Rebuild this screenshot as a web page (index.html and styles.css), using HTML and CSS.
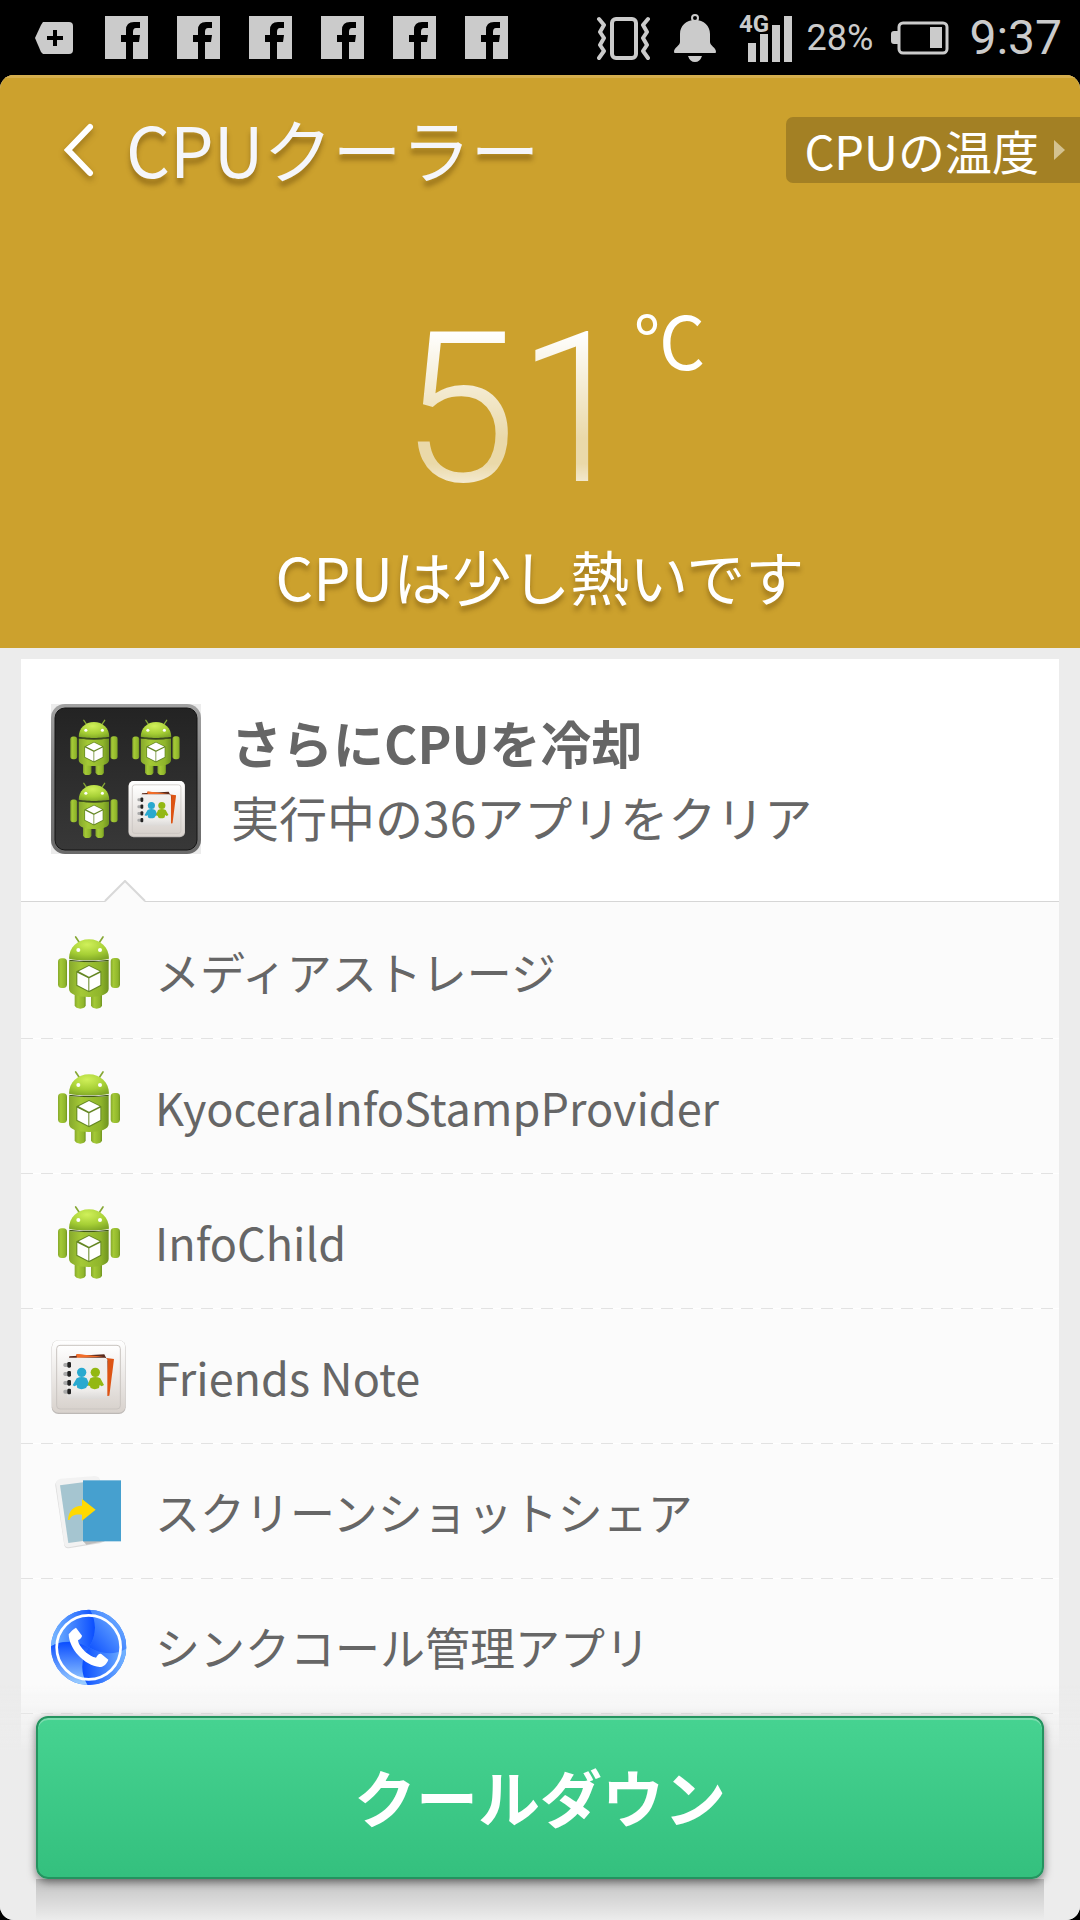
FILE: index.html
```html
<!DOCTYPE html>
<html lang="ja">
<head>
<meta charset="utf-8">
<meta name="viewport" content="width=device-width, initial-scale=1">
<title>CPUクーラー</title>
<link rel="stylesheet" href="styles.css">
</head>
<body>
<svg class="sprite" width="0" height="0" aria-hidden="true">
  <defs>
    <linearGradient id="g-body" x1="0" y1="0" x2="1" y2="0">
      <stop offset="0" stop-color="#86a82c"/><stop offset=".3" stop-color="#a4c936"/><stop offset=".8" stop-color="#8fb52b"/><stop offset="1" stop-color="#6f9320"/>
    </linearGradient>
    <radialGradient id="g-head" cx=".45" cy=".25" r=".8">
      <stop offset="0" stop-color="#d0f05a"/><stop offset=".6" stop-color="#a6cf35"/><stop offset="1" stop-color="#7fa626"/>
    </radialGradient>
    <linearGradient id="g-tile" x1="0" y1="0" x2="0" y2="1">
      <stop offset="0" stop-color="#ffffff"/><stop offset="1" stop-color="#d8d2cd"/>
    </linearGradient>
    <linearGradient id="g-page" x1="0" y1="0" x2="0" y2="1">
      <stop offset="0" stop-color="#f1f0ef"/><stop offset=".8" stop-color="#eeecea"/><stop offset="1" stop-color="#dcdad8"/>
    </linearGradient>
    <linearGradient id="g-thumb" x1="0" y1="0" x2="0" y2="1">
      <stop offset="0" stop-color="#232323"/><stop offset="1" stop-color="#383838"/>
    </linearGradient>
    <linearGradient id="g-thumb-edge" x1="0" y1="0" x2="0" y2="1">
      <stop offset="0" stop-color="#a2a2a2"/><stop offset=".5" stop-color="#7e7e7e"/><stop offset="1" stop-color="#6a6a6a"/>
    </linearGradient>
    <linearGradient id="g-blue-a" x1="0" y1="0" x2="1" y2="0">
      <stop offset="0" stop-color="#7cbcff"/><stop offset="1" stop-color="#0a4dff"/>
    </linearGradient>
    <linearGradient id="g-blue-b" x1="1" y1="0" x2="0" y2="1">
      <stop offset="0" stop-color="#8ccaff"/><stop offset="1" stop-color="#0a4dff"/>
    </linearGradient>
    <linearGradient id="g-blue-c" x1="1" y1="0" x2="0" y2="0">
      <stop offset="0" stop-color="#7cbcff"/><stop offset="1" stop-color="#0a4dff"/>
    </linearGradient>
    <linearGradient id="g-blue-d" x1="0" y1="1" x2="0" y2="0">
      <stop offset="0" stop-color="#a6d8ff"/><stop offset="1" stop-color="#0a4dff"/>
    </linearGradient>
  </defs>

  <symbol id="android" viewBox="63 69 228 228">
    <path d="M137 78l12 18M219 78l-12 18" stroke="#86a835" stroke-width="5" stroke-linecap="round"/>
    <path d="M117 143c0-34 26-58 60-58s60 24 60 58c-18 6-102 6-120 0z" fill="url(#g-head)"/>
    <rect x="84" y="142" width="27" height="89" rx="11" fill="url(#g-body)"/>
    <rect x="242" y="141" width="28" height="90" rx="11" fill="url(#g-body)"/>
    <path d="M134 245h33v38q-2 10-16 10t-17-10z" fill="url(#g-body)"/>
    <path d="M183 245h33v38q-2 10-16 10t-17-10z" fill="url(#g-body)"/>
    <path d="M117 150q60 7 119 0v84c0 16-24 24-59 24s-60-8-60-24z" fill="url(#g-body)"/>
    <path d="M118 146q60 7 118 0v4q-60 7-118 0z" fill="#43591a"/>
    <circle cx="145" cy="117" r="6" fill="#fff"/>
    <circle cx="210" cy="117" r="6" fill="#fff"/>
    <path d="M177 162l37 19v43l-37 20-38-20v-43z" fill="#658724"/>
    <path d="M177 165l32 16-32 16-31-16zM142 185l33 17v37l-33-17zM211 185l-33 17v37l33-17z" fill="#fff"/>
  </symbol>

  <symbol id="friends" viewBox="63 54 228 228">
    <rect x="65" y="58" width="222" height="221" rx="20" fill="#bdb9b6"/>
    <rect x="66" y="58" width="220" height="217" rx="19" fill="url(#g-tile)"/>
    <rect x="80" y="73" width="191" height="191" rx="10" fill="url(#g-tile)" stroke="#c9c4c0" stroke-width="3"/>
    <path d="M140 99l112 15-14 110-12 2-92-110z" fill="#dd5414"/>
    <path d="M118 106l105-6 10 20-5 100-112-100z" fill="#5a2a1c"/>
    <path d="M140 99l80 8-80 4z" fill="#f36d28"/>
    <rect x="111" y="110" width="121" height="123" rx="8" fill="url(#g-page)"/>
    <g fill="#aaa"><rect x="100" y="126" width="14" height="12" rx="5"/><rect x="100" y="153" width="14" height="12" rx="5"/><rect x="100" y="180" width="14" height="12" rx="5"/><rect x="100" y="206" width="14" height="12" rx="5"/></g>
    <g fill="#222"><rect x="112" y="123" width="11" height="17" rx="4"/><rect x="112" y="150" width="11" height="17" rx="4"/><rect x="112" y="177" width="11" height="17" rx="4"/><rect x="112" y="203" width="11" height="17" rx="4"/></g>
    <circle cx="155" cy="154" r="14" fill="#29a9cf"/>
    <path d="M140 172q15-8 30 0l9 19-8 5-3 5q-14 7-26 0l-2-9-6 4-6-3z" fill="#29a9cf"/>
    <circle cx="196" cy="154" r="14" fill="#93b813"/>
    <path d="M181 172q15-8 30 0l11 20-7 4-6-4-2 9q-13 7-25 0l-2-5-7-4z" fill="#93b813"/>
  </symbol>

  <symbol id="share" viewBox="63 459 228 228">
    <path d="M92 476l104-9q10 0 12 8l16 186-14 6-94 15q-11 1-13-9L76 493q-1-12 16-17z" fill="#dcdcdc"/>
    <path d="M92 473l104-8q8 0 12 8l10 188-102 18q-11 1-13-9L78 490q-1-14 14-17z" fill="#f2f2f2"/>
    <path d="M90 493l69-9v176l-44 6z" fill="#a5c5d0"/>
    <path d="M159 660h66l-56 11z" fill="#bcbcbc"/>
    <rect x="159" y="478" width="114" height="183" fill="#46a0cf"/>
    <path d="M114 597c2-28 16-42 42-43v-20l41 32-41 33v-18c-21-2-32 2-38 16z" fill="#ffd900"/>
  </symbol>

  <symbol id="sync" viewBox="63 864 228 228">
    <clipPath id="disc"><circle cx="176" cy="979" r="113"/></clipPath>
    <g clip-path="url(#disc)">
      <rect x="63" y="866" width="226" height="226" fill="#2a74ff"/>
      <path d="M60 860h117c24 40 24 80 0 119-50-26-90-18-117-1z" fill="url(#g-blue-a)"/>
      <path d="M177 860h120v120c-45 26-85 20-120-1 24-39 24-79 0-119z" fill="url(#g-blue-b)"/>
      <path d="M297 978v120H176c-26-40-26-80 0-119 40 22 80 26 121-1z" fill="url(#g-blue-c)"/>
      <path d="M60 978c30-20 76-20 116 1-26 39-26 79 0 119H60z" fill="url(#g-blue-d)"/>
    </g>
    <circle cx="176" cy="979" r="96" fill="none" stroke="#fff" stroke-width="8"/>
    <path d="M138 920l18 24q0 6-12 14c2 20 34 50 54 52 6-10 10-14 16-11l21 17c-4 12-14 22-26 22-46-4-92-54-93-98 6-8 14-16 22-20z" fill="#fff"/>
  </symbol>

  <symbol id="fb" viewBox="0 0 43 43">
    <path d="M0 0h43v43H28V26h6l1-7h-7v-3q0-4 3-4h4V6h-6q-8 0-8 8v5h-5v7h5v17H0z" fill="#cbcbcb"/>
  </symbol>
</svg>

<header class="status-bar">
  <div class="notices">
    <svg class="tag" viewBox="0 0 38 32"><path d="M8 0h26q4 0 4 4v24q0 4-4 4H8L6 30 0 16 6 3z" fill="#cbcbcb"/><path d="M12 16h16M20 8v16" stroke="#000" stroke-width="4"/></svg>
    <svg class="fb"><use href="#fb"/></svg>
    <svg class="fb"><use href="#fb"/></svg>
    <svg class="fb"><use href="#fb"/></svg>
    <svg class="fb"><use href="#fb"/></svg>
    <svg class="fb"><use href="#fb"/></svg>
    <svg class="fb"><use href="#fb"/></svg>
  </div>
  <div class="system">
    <svg class="vibrate" viewBox="0 0 56 44" fill="none" stroke="#cbcbcb" stroke-width="4" stroke-linecap="round" stroke-linejoin="round"><rect x="16" y="3" width="24" height="39" rx="4"/><path d="M3 3l5 6-4 7 4 6-4 7 4 6-5 7M52 3l-5 6 4 7-4 6 4 7-4 6 5 7"/></svg>
    <svg class="bell" viewBox="0 0 42 48" fill="#cbcbcb"><circle cx="21" cy="4" r="3" fill="none" stroke="#cbcbcb" stroke-width="2"/><path d="M21 6c9 0 15 6 15 14v8c0 4 6 5 6 10 0 1-1 1-2 1H2c-1 0-2 0-2-1 0-5 6-6 6-10v-8C6 12 12 6 21 6zM14 42h14q-2 6-7 6t-7-6z"/></svg>
    <svg class="signal" viewBox="0 0 54 50" fill="#cbcbcb"><path d="M9 30h8v19H9zM21 21h8v28h-8zM33 12h8v37h-8zM45 3h8v46h-8z"/><text class="network" x="0" y="19">4G</text></svg>
    <span class="battery-level">28%</span>
    <svg class="battery" viewBox="0 0 58 34"><rect x="8" y="2" width="48" height="30" rx="4" fill="none" stroke="#cbcbcb" stroke-width="3"/><path d="M7 10H3q-3 0-3 3v7q0 3 3 3h4zM39 6h12v21H39z" fill="#cbcbcb"/></svg>
    <time class="clock">9:37</time>
  </div>
</header>

<main class="app">
  <section class="hero">
    <div class="title-row">
      <button class="back" type="button" aria-label="戻る">
        <svg viewBox="0 0 30 54"><path d="M26 4L4 27l22 23" fill="none" stroke="#fff" stroke-width="6" stroke-linecap="round"/></svg>
      </button>
      <h1 class="title">CPUクーラー</h1>
      <button class="temp-link" type="button">CPUの温度
        <svg viewBox="0 0 11 20"><path d="M0 0l11 10L0 20z" fill="#d4c290"/></svg>
      </button>
    </div>
    <p class="reading"><span class="degrees">51</span><span class="unit">℃</span></p>
    <p class="message">CPUは少し熱いです</p>
  </section>

  <section class="card">
    <div class="summary">
      <svg class="thumb" viewBox="0 0 150 150">
        <rect width="150" height="150" fill="#ececec"/>
        <rect width="150" height="150" rx="14" fill="url(#g-thumb-edge)"/>
        <rect x="4" y="4" width="142" height="142" rx="10" fill="url(#g-thumb)" stroke="#151515"/>
        <use href="#android" x="14" y="14" width="58" height="58"/>
        <use href="#android" x="76" y="14" width="58" height="58"/>
        <use href="#android" x="14" y="77" width="58" height="58"/>
        <use href="#friends" x="77" y="76" width="58" height="58"/>
      </svg>
      <div class="summary-text">
        <h2>さらにCPUを冷却</h2>
        <p>実行中の36アプリをクリア</p>
      </div>
      <svg class="pointer" viewBox="0 0 42 22"><path d="M1 22L21 2l20 20z" fill="#fbfbfb"/><path d="M1 21L21 1l20 20" fill="none" stroke="#d8d8d8" stroke-width="2"/></svg>
    </div>
    <ul class="apps">
      <li><svg class="icon"><use href="#android"/></svg>メディアストレージ</li>
      <li><svg class="icon"><use href="#android"/></svg>KyoceraInfoStampProvider</li>
      <li><svg class="icon"><use href="#android"/></svg>InfoChild</li>
      <li><svg class="icon"><use href="#friends"/></svg>Friends Note</li>
      <li><svg class="icon"><use href="#share"/></svg>スクリーンショットシェア</li>
      <li><svg class="icon"><use href="#sync"/></svg>シンクコール管理アプリ</li>
    </ul>
  </section>
</main>

<footer class="action-bar">
  <button class="cool-down" type="button">クールダウン</button>
</footer>
</body>
</html>
```
FILE: styles.css
```css
* { box-sizing: border-box; }

body {
  margin: 0;
  min-height: 100vh;
  display: flex;
  flex-direction: column;
  background: #000;
  font-family: "Noto Sans CJK JP", sans-serif;
  color: #666;
}

h1, h2, p, ul { margin: 0; padding: 0; }
h1 { font-weight: 400; }
button { border: 0; padding: 0; background: none; font: inherit; color: inherit; }
svg { display: block; flex: none; }
.sprite { position: absolute; }

/* status bar */
.status-bar {
  display: flex;
  justify-content: space-between;
  align-items: center;
  height: 75px;
  padding: 0 18px 0 35px;
  color: #cbcbcb;
  font-family: Roboto, sans-serif;
}
.notices, .system { display: flex; align-items: center; }
.notices { gap: 29px; }
.tag { width: 38px; height: 32px; margin-right: 3px; }
.fb { width: 43px; height: 43px; }
.vibrate { width: 56px; height: 44px; margin-right: 22px; }
.bell { width: 42px; height: 48px; margin-right: 23px; }
.signal { width: 54px; height: 50px; margin-right: 14px; overflow: visible; }
.network { font-size: 24px; font-weight: 700; }
.battery-level { font-size: 36px; margin-right: 18px; }
.battery { width: 58px; height: 34px; margin-right: 20px; }
.clock { font-size: 48px; }

/* app window */
.app {
  flex: 1;
  display: flex;
  flex-direction: column;
  background: #ececec;
  border-radius: 14px;
  overflow: hidden;
}

.hero {
  padding: 39px 0 30px;
  border-top: 3px solid #d5ae4d;
  background: #cca12d;
  color: #fff;
  text-align: center;
}
.title-row { display: flex; align-items: center; height: 66px; padding-left: 64px; }
.back { margin-right: 32px; }
.back svg { width: 30px; height: 54px; filter: drop-shadow(0 4px 3px rgba(80, 50, 0, .4)); }
.title {
  flex: 1;
  padding-bottom: 4px;
  text-align: left;
  font-size: 69px;
  line-height: 66px;
  color: #f5f6fa;
  text-shadow: 0 6px 5px rgba(80, 50, 0, .4);
}
.temp-link {
  display: flex;
  align-items: center;
  gap: 15px;
  height: 66px;
  padding: 0 15px 0 18px;
  border-radius: 7px 0 0 7px;
  background: #a38024;
  font-size: 47px;
  line-height: 64px;
}
.temp-link svg { width: 11px; height: 20px; }

.reading {
  display: flex;
  justify-content: center;
  align-items: flex-start;
  margin-top: 121px;
  padding-left: 26px;
}
.degrees {
  font-family: Roboto, sans-serif;
  font-weight: 300;
  font-size: 210px;
  line-height: 210px;
  background: linear-gradient(#fff 13%, #ead9a9 64%, #ead9a9 76%, #f3e9cf 85%);
  background-clip: text;
  -webkit-background-clip: text;
  color: transparent;
}
.unit { font-size: 72px; line-height: 68px; }

.message {
  margin-top: 22px;
  padding-bottom: 2px;
  font-size: 59px;
  line-height: 80px;
  text-shadow: 0 5px 5px rgba(80, 50, 0, .4);
}

/* app list */
.card {
  flex: 1;
  margin: 11px 21px 0;
  background: #fbfbfb;
}
.summary {
  position: relative;
  display: flex;
  align-items: center;
  gap: 30px;
  height: 243px;
  padding: 45px 30px 48px;
  border-bottom: 1px solid #d6d6d6;
  background: #fff;
}
.thumb { width: 150px; height: 150px; }
.summary-text h2 { font-size: 51px; line-height: 74px; }
.summary-text p { font-size: 48px; line-height: 74px; }
.pointer {
  position: absolute;
  left: 83px;
  bottom: -1px;
  width: 42px;
  height: 22px;
}

.apps { list-style: none; padding: 2px 0 205px; }
.apps li {
  display: flex;
  align-items: center;
  gap: 28px;
  height: 135px;
  padding-left: 30px;
  font-size: 45px;
  line-height: 60px;
  background: repeating-linear-gradient(to right, #e2e2e2 0 12px, #fff 12px 20px) bottom left / 100% 1px no-repeat;
}
.icon { width: 76px; height: 76px; }

/* pinned action */
.action-bar {
  position: fixed;
  left: 0;
  right: 0;
  bottom: 0;
  padding: 31px 36px 0;
  border-radius: 0 0 14px 14px;
  overflow: hidden;
  background: linear-gradient(rgba(236, 236, 236, 0), #ececec 66px);
}
.action-bar::after {
  content: "";
  display: block;
  height: 41px;
  background: linear-gradient(#c2c2c2, #ececec);
}
.cool-down {
  position: relative;
  display: block;
  width: 100%;
  height: 163px;
  padding-bottom: 4px;
  border: 2px solid #24935f;
  border-radius: 12px;
  background: linear-gradient(#46d391, #34c07e);
  box-shadow: inset 0 2px 0 #7ddcaf, 0 3px 8px rgba(0, 0, 0, .5);
  color: #fff;
  font-size: 62px;
  font-weight: 700;
}
```
